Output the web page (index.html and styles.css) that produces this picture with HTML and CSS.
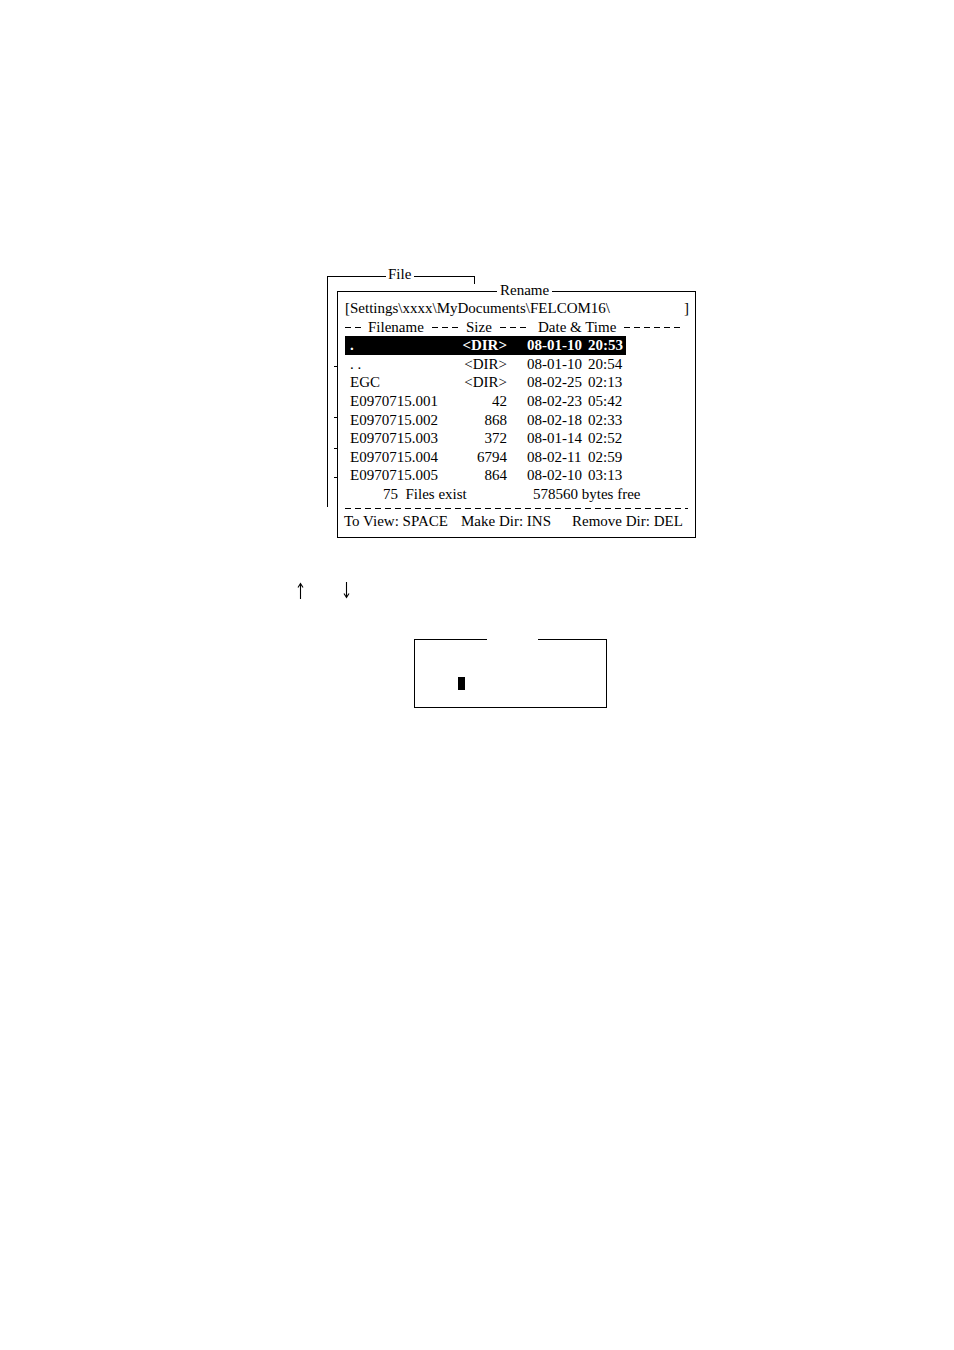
FILE: index.html
```html
<!DOCTYPE html>
<html>
<head>
<meta charset="utf-8">
<link rel="stylesheet" href="styles.css">
</head>
<body>
<div class="page">
  <div class="diagram">
    <div class="file-head">
      <span class="seg seg-left"></span>
      <span class="file-label">File</span>
      <span class="seg seg-right"></span>
    </div>
    <div class="rename-box">
      <span class="legend">Rename</span>
      <span class="tick t1"></span>
      <span class="tick t2"></span>
      <span class="tick t3"></span>
      <span class="tick t4"></span>
      <div class="path-row"><span>[Settings\xxxx\MyDocuments\FELCOM16\</span><span>]</span></div>
      <div class="header-row">
        <span class="dash d-a"></span>
        <span class="h-name">Filename</span>
        <span class="dash d-b"></span>
        <span class="h-size">Size</span>
        <span class="dash d-c"></span>
        <span class="h-date">Date &amp; Time</span>
        <span class="dash d-d"></span>
      </div>
      <div class="file-row selected"><span>.</span><span class="size">&lt;DIR&gt;</span><span class="date">08-01-10</span><span>20:53</span></div>
      <div class="file-row"><span>. .</span><span class="size">&lt;DIR&gt;</span><span class="date">08-01-10</span><span>20:54</span></div>
      <div class="file-row"><span>EGC</span><span class="size">&lt;DIR&gt;</span><span class="date">08-02-25</span><span>02:13</span></div>
      <div class="file-row"><span>E0970715.001</span><span class="size">42</span><span class="date">08-02-23</span><span>05:42</span></div>
      <div class="file-row"><span>E0970715.002</span><span class="size">868</span><span class="date">08-02-18</span><span>02:33</span></div>
      <div class="file-row"><span>E0970715.003</span><span class="size">372</span><span class="date">08-01-14</span><span>02:52</span></div>
      <div class="file-row"><span>E0970715.004</span><span class="size">6794</span><span class="date">08-02-11</span><span>02:59</span></div>
      <div class="file-row"><span>E0970715.005</span><span class="size">864</span><span class="date">08-02-10</span><span>03:13</span></div>
      <div class="summary-row"><span class="count">75  Files exist</span><span>578560 bytes free</span></div>
      <div class="dash separator"></div>
      <div class="footer-row"><span class="f1">To View: SPACE</span><span class="f2">Make Dir: INS</span><span>Remove Dir: DEL</span></div>
    </div>
  </div>
  <div class="arrows">
    <svg class="arrow up" width="9" height="17" viewBox="0 0 9 17" aria-label="up">
      <path d="M4.5 1.5V17M2 5.5L4.5 1.5L7 5.5" fill="none" stroke="#000" stroke-width="1.1"/>
    </svg>
    <svg class="arrow down" width="9" height="17" viewBox="0 0 9 17" aria-label="down">
      <path d="M4.5 0V15.5M2 11.5L4.5 15.5L7 11.5" fill="none" stroke="#000" stroke-width="1.1"/>
    </svg>
  </div>
  <div class="input-box">
    <span class="input-legend"></span>
    <span class="cursor"></span>
  </div>
</div>
</body>
</html>
```
FILE: styles.css
```css
html, body {
  margin: 0;
  padding: 0;
  background: #fff;
}
body {
  font-family: "Liberation Serif", "Times New Roman", serif;
  font-size: 15px;
  color: #000;
}
.page {
  width: 954px;
  height: 1350px;
  overflow: hidden;
}
.diagram {
  position: relative;
  margin: 268px 0 0 327px;
  width: 369px;
}
.diagram::before {
  content: "";
  position: absolute;
  left: 0;
  top: 8px;
  width: 1px;
  height: 231px;
  background: #000;
}
.file-head {
  display: flex;
  align-items: flex-start;
  width: 148px;
  height: 16px;
  line-height: 12px;
}
.seg {
  display: block;
  margin-top: 8px;
  border-top: 1px solid #000;
}
.seg-left {
  width: 59px;
}
.file-label {
  padding: 0 3px 0 2px;
}
.seg-right {
  flex: 1;
  height: 7px;
  border-right: 1px solid #000;
}
.rename-box {
  position: relative;
  box-sizing: border-box;
  margin: 7px 0 0 10px;
  width: 359px;
  height: 247px;
  border: 1px solid #000;
  padding: 7px 6px 0 7px;
  line-height: 18.6px;
}
.legend {
  position: absolute;
  top: -11px;
  left: 159px;
  padding: 0 3px;
  background: #fff;
  line-height: 18px;
}
.tick {
  position: absolute;
  left: -4px;
  width: 4px;
  height: 1px;
  background: #000;
}
.t1 { top: 74px; }
.t2 { top: 125px; }
.t3 { top: 156px; }
.t4 { top: 185px; }
.path-row {
  display: flex;
  justify-content: space-between;
}
.header-row {
  display: flex;
  align-items: center;
  height: 18.6px;
  white-space: nowrap;
}
.dash {
  display: block;
  flex: none;
  height: 1px;
  background: repeating-linear-gradient(90deg, #000 0 6px, transparent 6px 10px);
}
.header-row .dash {
  margin-top: 1px;
}
.d-a { width: 18px; margin-right: 5px; }
.h-name { width: 64px; flex: none; }
.d-b { width: 26px; margin-right: 8px; }
.h-size { width: 34px; flex: none; }
.d-c { width: 26px; margin-right: 12px; }
.h-date { width: 86px; flex: none; }
.d-d { width: 60px; }
.file-row {
  display: grid;
  grid-template-columns: 100px 57px 81px 38px;
  width: 281px;
  box-sizing: border-box;
  padding-left: 5px;
  height: 18.6px;
  white-space: pre;
}
.file-row .date {
  padding-left: 20px;
}
.size {
  text-align: right;
}
.selected {
  background: #000;
  color: #fff;
  font-weight: bold;
}
.summary-row {
  display: grid;
  grid-template-columns: 188px auto;
  white-space: pre;
}
.count {
  padding-left: 38px;
}
.separator {
  width: 343px;
  margin-top: 4px;
}
.footer-row {
  display: flex;
  margin-top: 3px;
  margin-left: -1px;
  white-space: pre;
}
.f1 { width: 117px; flex: none; }
.f2 { width: 111px; flex: none; }
.arrows {
  display: flex;
  margin: 44px 0 0 296px;
  height: 17px;
}
.arrow {
  display: block;
  flex: none;
}
.up { margin-right: 37px; }
.input-box {
  position: relative;
  box-sizing: border-box;
  margin: 40px 0 0 414px;
  width: 193px;
  height: 69px;
  border: 1px solid #000;
  padding: 37px 0 0 43px;
}
.input-legend {
  position: absolute;
  top: -1px;
  left: 72px;
  width: 51px;
  height: 1px;
  background: #fff;
}
.cursor {
  display: block;
  width: 7px;
  height: 13px;
  background: #000;
}
```
